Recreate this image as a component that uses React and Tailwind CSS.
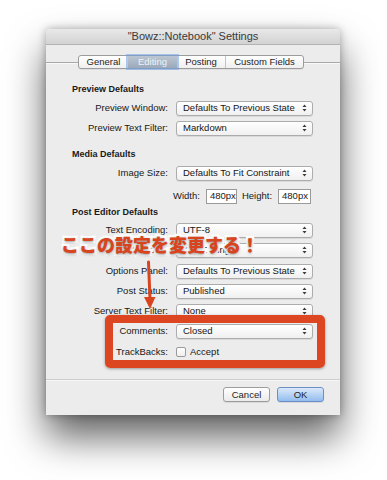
import React from 'react';

const font = "font-['Liberation_Sans',Arial,sans-serif]";

const sections = [
  {
    title: 'Preview Defaults',
    rows: [
      { label: 'Preview Window:', value: 'Defaults To Previous State' },
      { label: 'Preview Text Filter:', value: 'Markdown' },
    ],
  },
];

function Arrows() {
  return (
    <svg width="5" height="8" viewBox="0 0 5 8" className="shrink-0">
      <path d="M2.5 0.5 L4.5 3 L0.5 3 Z" fill="#3c3c3c" />
      <path d="M2.5 7.5 L4.5 5 L0.5 5 Z" fill="#3c3c3c" />
    </svg>
  );
}

function Select({ value }) {
  return (
    <div className="w-[137px] h-[15px] flex items-center justify-between pl-[6px] pr-[5px] bg-gradient-to-b from-white to-[#f0f0f0] border border-[#acacac] rounded-[3px] shadow-[0_1px_0_rgba(0,0,0,0.08)] text-[9.5px] text-[#161616] leading-none">
      <span>{value}</span>
      <Arrows />
    </div>
  );
}

function Row({ label, children }) {
  return (
    <div className="h-[20px] flex items-center">
      <div className="w-[97px] text-right text-[9.5px] text-[#181818] pr-px">{label}</div>
      <div className="ml-[7px]">{children}</div>
    </div>
  );
}

function Heading({ children, className = '' }) {
  return <div className={`h-[14px] flex items-center text-[9px] font-bold text-[#1a1a1a] ${className}`}>{children}</div>;
}

function Tabs() {
  const tabs = [
    { name: 'General', w: 'w-[49px]' },
    { name: 'Editing', w: 'w-[49px]', active: true },
    { name: 'Posting', w: 'w-[48px]' },
    { name: 'Custom Fields', w: 'w-[78px]' },
  ];
  return (
    <div className="flex items-center h-[14px] mt-[10px]">
      <div className="w-[32px] h-px bg-[#a9a9a9] shadow-[0_1px_0_#f8f8f8]" />
      <div className="flex h-[14px] border border-[#9c9c9c] rounded-[3px] bg-gradient-to-b from-white to-[#efefef] shadow-[0_1px_0_rgba(0,0,0,0.06)]">
        {tabs.map((t, i) => (
          <div
            key={t.name}
            className={`${t.w} flex items-center justify-center text-[9.5px] leading-none ${
              t.active
                ? 'bg-gradient-to-b from-[#bcc6d2] to-[#9aa9bb] text-[#eef2f6] shadow-[0_0_0_2px_rgba(110,160,230,0.55)] relative'
                : 'text-[#1e1e1e]'
            } ${i > 0 && !t.active && !tabs[i - 1].active ? 'border-l border-[#c4c4c4]' : ''}`}
          >
            {t.name}
          </div>
        ))}
      </div>
      <div className="flex-1 h-px bg-[#a9a9a9] shadow-[0_1px_0_#f8f8f8]" />
    </div>
  );
}

export default function App() {
  return (
    <div className={`relative w-[387px] h-[480px] bg-white pt-[29px] pl-[46px] overflow-hidden ${font}`}>
      <div className="w-[294px] h-[386px] bg-[#ececec] rounded-t-[4px] shadow-[0_22px_38px_rgba(0,0,0,0.62),0_0_8px_rgba(0,0,0,0.3)] flex flex-col">
        {/* title bar */}
        <div className="h-[16px] bg-gradient-to-b from-[#e9e9e9] to-[#d2d2d2] rounded-t-[4px] border-b border-[#b3b3b3] flex items-center justify-center text-[11px] text-[#3a3a3a] leading-none">
          "Bowz::Notebook" Settings
        </div>

        <Tabs />

        <div className="flex-1 pl-[26px] pr-[27px]">
          {sections.map(s => (
            <div key={s.title}>
              <Heading className="mt-[14px] mb-px">{s.title}</Heading>
              {s.rows.map(r => (
                <Row key={r.label} label={r.label}>
                  <Select value={r.value} />
                </Row>
              ))}
            </div>
          ))}

          <Heading className="mt-[10px] mb-px">Media Defaults</Heading>
          <Row label="Image Size:">
            <Select value="Defaults To Fit Constraint" />
          </Row>
          <div className="h-[20px] mt-[3px] flex items-center pl-[101px] text-[9.5px] text-[#181818]">
            <span>Width:</span>
            <div className="ml-[6px] w-[31px] h-[15px] bg-white border border-[#9a9a9a] flex items-center pl-[3px]">480px</div>
            <span className="ml-[5px]">Height:</span>
            <div className="ml-[6px] w-[33px] h-[15px] bg-white border border-[#9a9a9a] flex items-center pl-[3px]">480px</div>
          </div>

          <Heading>Post Editor Defaults</Heading>
          <Row label="Text Encoding:">
            <Select value="UTF-8" />
          </Row>
          <Row label="Edit Mode:">
            <Select value="Tag Editing" />
          </Row>
          <div className="h-px" />
          <Row label="Options Panel:">
            <Select value="Defaults To Previous State" />
          </Row>
          <Row label="Post Status:">
            <Select value="Published" />
          </Row>
          <Row label="Server Text Filter:">
            <Select value="None" />
          </Row>
          <Row label="Comments:">
            <Select value="Closed" />
          </Row>
          <div className="h-px" />
          <Row label="TrackBacks:">
            <div className="flex items-center text-[9.5px] text-[#181818]">
              <div className="w-[10px] h-[10px] rounded-[2px] border border-[#9a9a9a] bg-gradient-to-b from-white to-[#eeeeee]" />
              <span className="ml-[4px]">Accept</span>
            </div>
          </Row>
        </div>

        <div className="h-[36px] border-t border-[#cdcdcd] shadow-[inset_0_1px_0_#f6f6f6] flex justify-end items-start pt-[7px] pr-[16px] gap-[7px]">
          <button className="w-[47px] h-[15px] rounded-[3px] border border-[#9d9d9d] bg-gradient-to-b from-white to-[#ebebeb] text-[9.5px] text-[#1e1e1e] leading-none shadow-[0_1px_0_rgba(0,0,0,0.08)]">
            Cancel
          </button>
          <button className="w-[47px] h-[15px] rounded-[3px] border border-[#6a8fc6] bg-gradient-to-b from-[#dbe9fb] to-[#93bdee] text-[9.5px] text-[#1e1e1e] leading-none shadow-[0_1px_0_rgba(0,0,0,0.08)]">
            OK
          </button>
        </div>
      </div>

      {/* annotation overlay */}
      <div className="absolute left-[105px] top-[315px] w-[220px] h-[53px] border-[8px] border-[#dc4722] rounded-[5px] shadow-[0_1px_3px_rgba(0,0,0,0.35)]" />
      <svg className="absolute left-[140px] top-[258px]" width="20" height="56" viewBox="0 0 20 56">
        <path d="M8.5 4 L10 41" stroke="#d8441f" strokeWidth="3" strokeLinecap="round" />
        <path d="M4 39 L15.5 39 L10 51 Z" fill="#d8441f" />
      </svg>
      <div className="absolute left-[61px] top-[235px] text-[18px] leading-none font-black text-[#d9441e] font-['Noto_Sans_CJK_JP',sans-serif] [paint-order:stroke_fill] [-webkit-text-stroke:4.5px_white] [text-shadow:0_1px_3px_rgba(0,0,0,0.45)] whitespace-nowrap">
        ここの設定を変更する！
      </div>
    </div>
  );
}
